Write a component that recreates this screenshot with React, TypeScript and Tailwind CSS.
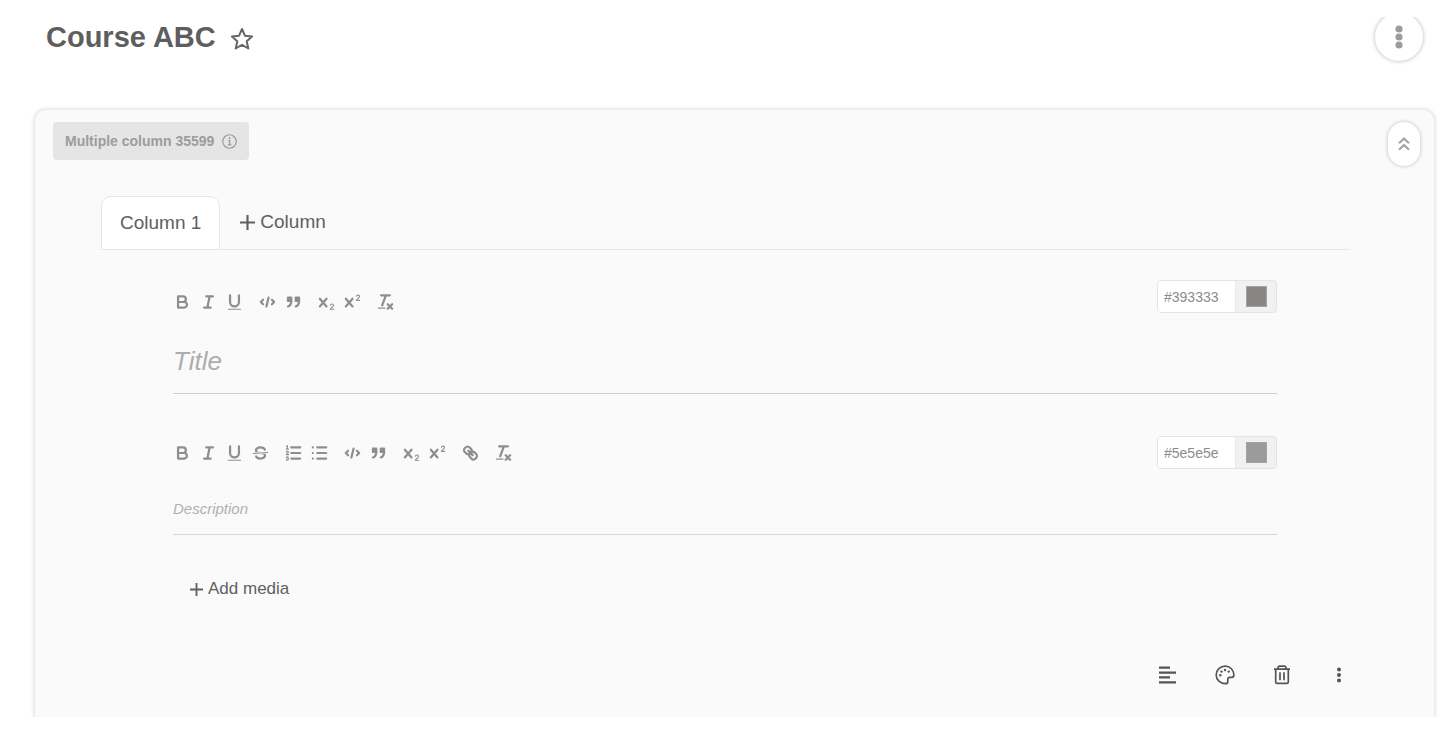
import type { ReactNode } from 'react';

type ToolName =
  | 'bold'
  | 'italic'
  | 'underline'
  | 'strike'
  | 'ordered'
  | 'bullet'
  | 'code'
  | 'quote'
  | 'sub'
  | 'super'
  | 'link'
  | 'clean';

const TOOL_ICONS: Record<ToolName, ReactNode> = {
  bold: (
    <>
      <path d="M5,4H9.5A2.5,2.5,0,0,1,12,6.5v0A2.5,2.5,0,0,1,9.5,9H5Z" />
      <path d="M5,9h5.5A2.5,2.5,0,0,1,13,11.5v0A2.5,2.5,0,0,1,10.5,14H5Z" />
    </>
  ),
  italic: <path d="M7 4h6M5 14h6M8 14l2-10" />,
  underline: (
    <>
      <path d="M5,3V9a4,4,0,0,0,4,4H9a4,4,0,0,0,4-4V3" />
      <rect x="3" y="15" width="12" height="1" rx=".5" fill="currentColor" stroke="none" />
    </>
  ),
  strike: (
    <>
      <path d="M15.5 8.5L2.5 9.5" strokeWidth="1" />
      <g fill="currentColor" stroke="none">
        <path d="M9.007,8C6.542,7.791,6,7.519,6,6.5,6,5.792,7.283,5,9,5c1.571,0,2.765.679,2.969,1.309a1,1,0,0,0,1.9-.617C13.356,4.106,11.354,3,9,3,6.2,3,4,4.538,4,6.5a3.2,3.2,0,0,0,.5,1.843Z" />
        <path d="M8.984,10C11.457,10.208,12,10.479,12,11.5c0,.708-1.283,1.5-3,1.5-1.571,0-2.765-.679-2.969-1.309a1,1,0,1,0-1.9.617C4.644,13.894,6.646,15,9,15c2.8,0,5-1.538,5-3.5a3.2,3.2,0,0,0-.5-1.843Z" />
      </g>
    </>
  ),
  ordered: (
    <>
      <path d="M7 4h8M7 9h8M7 14h8" />
      <g strokeWidth="1">
        <path d="M2.5 5.5h2M2.5 2.9l1-.5v3" />
        <path d="M4.5,10.5h-2c0-.234,1.85-1.076,1.85-2.234A0.959,0.959,0,0,0,2.5,8.156" />
        <path d="M2.5,14.846a0.959,0.959,0,0,0,1.85-.109A0.7,0.7,0,0,0,3.75,14a0.688,0.688,0,0,0,.6-0.736,0.959,0.959,0,0,0-1.85-.109" />
      </g>
    </>
  ),
  bullet: (
    <>
      <path d="M7 4h8M7 9h8M7 14h8" />
      <path d="M3 4h.01M3 9h.01M3 14h.01" />
    </>
  ),
  code: <path d="M5 7L3 9l2 2M13 7l2 2-2 2M10 5L8 13" />,
  quote: (
    <g fill="currentColor">
      <rect x="4" y="5" width="3" height="3" />
      <rect x="11" y="5" width="3" height="3" />
      <path d="M7,8c0,4.031-3,5-3,5" />
      <path d="M14,8c0,4.031-3,5-3,5" />
    </g>
  ),
  sub: (
    <>
      <path d="M3 6l6 7M9 6l-6 7" />
      <path d="M12.5 11.8c.3-1.4 2.8-1.4 2.8.2 0 1.6-2.8 2.2-2.8 3.5h3" strokeWidth="1" />
    </>
  ),
  super: (
    <>
      <path d="M3 6l6 7M9 6l-6 7" />
      <path d="M12.5 3.8c.3-1.4 2.8-1.4 2.8.2 0 1.6-2.8 2.2-2.8 3.5h3" strokeWidth="1" />
    </>
  ),
  link: (
    <>
      <path d="M7 7l4 4" />
      <path d="M8.9,4.577a3.476,3.476,0,0,1,.36,4.679A3.476,3.476,0,0,1,4.577,8.9C3.185,7.5,2.035,6.4,4.217,4.217S7.5,3.185,8.9,4.577Z" />
      <path d="M13.423,9.1a3.476,3.476,0,0,0-4.679-.36,3.476,3.476,0,0,0,.36,4.679c1.392,1.392,2.5,2.542,4.679.36S14.815,10.5,13.423,9.1Z" />
    </>
  ),
  clean: (
    <>
      <path d="M5 3h8M6 12L9.35 3M11 11l4 4M15 11l-4 4" />
      <rect x="2" y="14" width="7" height="1" rx=".5" fill="currentColor" stroke="none" />
    </>
  ),
};

const TITLE_TOOLS: ToolName[][] = [['bold', 'italic', 'underline'], ['code', 'quote'], ['sub', 'super'], ['clean']];

const DESCRIPTION_TOOLS: ToolName[][] = [
  ['bold', 'italic', 'underline', 'strike'],
  ['ordered', 'bullet'],
  ['code', 'quote'],
  ['sub', 'super'],
  ['link'],
  ['clean'],
];

function Toolbar({ groups }: { groups: ToolName[][] }) {
  return (
    <div className="flex h-5 items-center gap-[7px] -ml-1 text-[#8e8e8e]">
      {groups.map((group) => (
        <div key={group[0]} className="flex">
          {group.map((name) => (
            <button key={name} type="button" aria-label={name} className="flex w-[26px] justify-center">
              <svg
                viewBox="0 0 18 18"
                className="w-[21px] h-5"
                fill="none"
                stroke="currentColor"
                strokeWidth="2"
                strokeLinecap="round"
                strokeLinejoin="round"
              >
                {TOOL_ICONS[name]}
              </svg>
            </button>
          ))}
        </div>
      ))}
    </div>
  );
}

function ColorField({ label, value, swatch }: { label: string; value: string; swatch: string }) {
  return (
    <div className="flex h-[33px] shrink-0 overflow-hidden rounded border border-[#e4e4e4] bg-[#f1f1f1]">
      <input
        aria-label={label}
        defaultValue={value}
        className="w-[78px] border-r border-[#e8e8e8] bg-white px-1.5 text-sm text-[#8c8c8c] outline-none"
      />
      <button type="button" aria-label={`Pick ${label}`} className="flex w-10 items-center justify-center">
        <span className={`h-[21px] w-[21px] border border-[#a3a3a3] ${swatch}`} />
      </button>
    </div>
  );
}

function PlusIcon({ className }: { className: string }) {
  return (
    <svg viewBox="0 0 14 14" className={className} fill="none" stroke="currentColor" strokeWidth="2">
      <path d="M7 0v14M0 7h14" />
    </svg>
  );
}

function CardActions() {
  return (
    <div className="mt-16 flex justify-end gap-[37px] text-[#555]">
      <button type="button" aria-label="Align">
        <svg viewBox="0 0 20 20" className="h-5 w-5" fill="none" stroke="currentColor" strokeWidth="2.2">
          <path d="M1 2.6h11M1 7.6h17M1 12.4h11M1 17.3h17" />
        </svg>
      </button>
      <button type="button" aria-label="Theme">
        <svg viewBox="0 0 20 20" className="h-5 w-5" fill="none" stroke="currentColor" strokeWidth="1.7">
          <path
            d="M10.3 1.2C5.2 1.2 1.2 5 1.2 10c0 5 4.2 8.7 9.3 8.7 1.500 0 2.300-.7 2.300-2v-2.300c0-1.300.8-2 2-2h2.100c1.300 0 2-.8 2-2.300 0-5.100-3.800-8.900-8.600-8.900Z"
            strokeLinejoin="round"
          />
          <g fill="currentColor" stroke="none">
            <circle cx="5.3" cy="10.2" r="1.2" />
            <circle cx="6.5" cy="6.6" r="1.2" />
            <circle cx="10" cy="5" r="1.2" />
            <circle cx="13.7" cy="6.6" r="1.2" />
          </g>
        </svg>
      </button>
      <button type="button" aria-label="Delete">
        <svg viewBox="0 0 20 20" className="h-5 w-5" fill="none" stroke="currentColor" strokeWidth="1.7">
          <path d="M2 4.2h16M6 4.2V2.8c0-1.100.6-1.700 1.700-1.700h4.600c1.100 0 1.700.6 1.700 1.700v1.400M3.700 4.200v12.700c0 .9.6 1.500 1.500 1.500h9.600c.9 0 1.500-.6 1.500-1.500V4.200M8 7.300v8M12 7.300v8" />
        </svg>
      </button>
      <button type="button" aria-label="More actions">
        <svg viewBox="0 0 20 20" className="h-5 w-5" fill="currentColor">
          <circle cx="10" cy="4.400" r="2" />
          <circle cx="10" cy="10" r="2" />
          <circle cx="10" cy="15.600" r="2" />
        </svg>
      </button>
    </div>
  );
}

function ColumnCard() {
  return (
    <section className="rounded-t-xl border border-b-0 border-[#e9e9e9] bg-[#fafafa] pt-3 pr-3.5 pb-8 pl-[18px] shadow-[0_0_4px_rgba(0,0,0,0.14)]">
      <div className="flex items-start justify-between">
        <div className="flex h-[38px] items-center gap-2 rounded bg-[#e5e5e5] px-3 text-sm font-bold text-[#9c9c9c]">
          Multiple column 35599
          <svg viewBox="0 0 16 16" className="h-[15px] w-[15px]" fill="none" stroke="currentColor" strokeWidth="1.3">
            <circle cx="8" cy="8" r="7.2" />
            <path d="M6.5 7h1.700v4.500M6.200 11.500h3.800" />
            <circle cx="8" cy="4.500" r="1" fill="currentColor" stroke="none" />
          </svg>
        </div>
        <button
          type="button"
          aria-label="Collapse"
          className="flex h-[44px] w-8 items-center justify-center rounded-full bg-white text-[#a6a6a6] shadow-[0_0_4px_rgba(0,0,0,0.24)]"
        >
          <svg viewBox="0 0 12 14" className="h-3.5 w-3" fill="none" stroke="currentColor" strokeWidth="2.2">
            <path d="M1 6.200l5-4.600 5 4.600M1 12.700l5-4.600 5 4.600" />
          </svg>
        </button>
      </div>

      <div className="mt-[30px] mr-[71px] ml-12">
        <div className="flex border-b border-[#e6e6e6] text-[19px] text-[#606060]">
          <button
            type="button"
            className="-mb-px h-[54px] rounded-t-[10px] border border-[#e6e6e6] bg-white px-[18px]"
          >
            Column 1
          </button>
          <button type="button" className="flex items-center gap-[5px] px-5">
            <PlusIcon className="h-[15px] w-[15px]" />
            Column
          </button>
        </div>

        <div className="px-[72px] pt-[30px]">
          <div className="flex items-start justify-between">
            <div className="pt-3">
              <Toolbar groups={TITLE_TOOLS} />
            </div>
            <ColorField label="Title color" value="#393333" swatch="bg-[#888585]" />
          </div>
          <input
            aria-label="Title"
            placeholder="Title"
            className="mt-[25px] h-14 w-full border-b border-[#cdcdcd] bg-transparent pb-[9px] text-[26px] italic outline-none placeholder:text-[#adadad]"
          />

          <div className="mt-[42px] flex items-center justify-between">
            <Toolbar groups={DESCRIPTION_TOOLS} />
            <ColorField label="Description color" value="#5e5e5e" swatch="bg-[#9b9b9b]" />
          </div>
          <input
            aria-label="Description"
            placeholder="Description"
            className="mt-5 h-[46px] w-full border-b border-[#d8d8d8] bg-transparent pb-1.5 text-[15px] italic outline-none placeholder:text-[#b0b0b0]"
          />

          <button type="button" className="mt-[42px] ml-[17px] flex h-6 items-center gap-[5px] text-[17px] text-[#606060]">
            <PlusIcon className="h-[13px] w-[13px]" />
            Add media
          </button>
        </div>

        <CardActions />
      </div>
    </section>
  );
}

export default function App() {
  return (
    <div className="bg-white pt-[17px] font-['Liberation_Sans',Arial,sans-serif]">
      <main className="overflow-hidden pr-5 pl-[34px]">
        <header className="flex items-start justify-between pr-3 pb-12 pl-3">
          <div className="flex items-center gap-3.5">
            <h1 className="text-[29px] leading-10 font-bold text-[#5e5e5e]">Course ABC</h1>
            <button type="button" aria-label="Favorite" className="pt-1 text-[#666]">
              <svg
                viewBox="0 0 24 24"
                className="h-6 w-6"
                fill="none"
                stroke="currentColor"
                strokeWidth="2"
                strokeLinejoin="round"
              >
                <path d="M12 2l2.900 6.700 7.200.7-5.400 4.900 1.600 7.200L12 17.800l-6.300 3.700 1.600-7.200-5.400-4.900 7.200-.7Z" />
              </svg>
            </button>
          </div>
          <button
            type="button"
            aria-label="Course options"
            className="-mt-1 flex h-12 w-12 items-center justify-center rounded-full bg-white text-[#9c9c9c] shadow-[0_0_4px_rgba(0,0,0,0.3)]"
          >
            <svg viewBox="0 0 8 24" className="h-6 w-2" fill="currentColor">
              <circle cx="4" cy="4" r="3.6" />
              <circle cx="4" cy="12" r="3.6" />
              <circle cx="4" cy="20" r="3.6" />
            </svg>
          </button>
        </header>
        <ColumnCard />
      </main>
    </div>
  );
}
